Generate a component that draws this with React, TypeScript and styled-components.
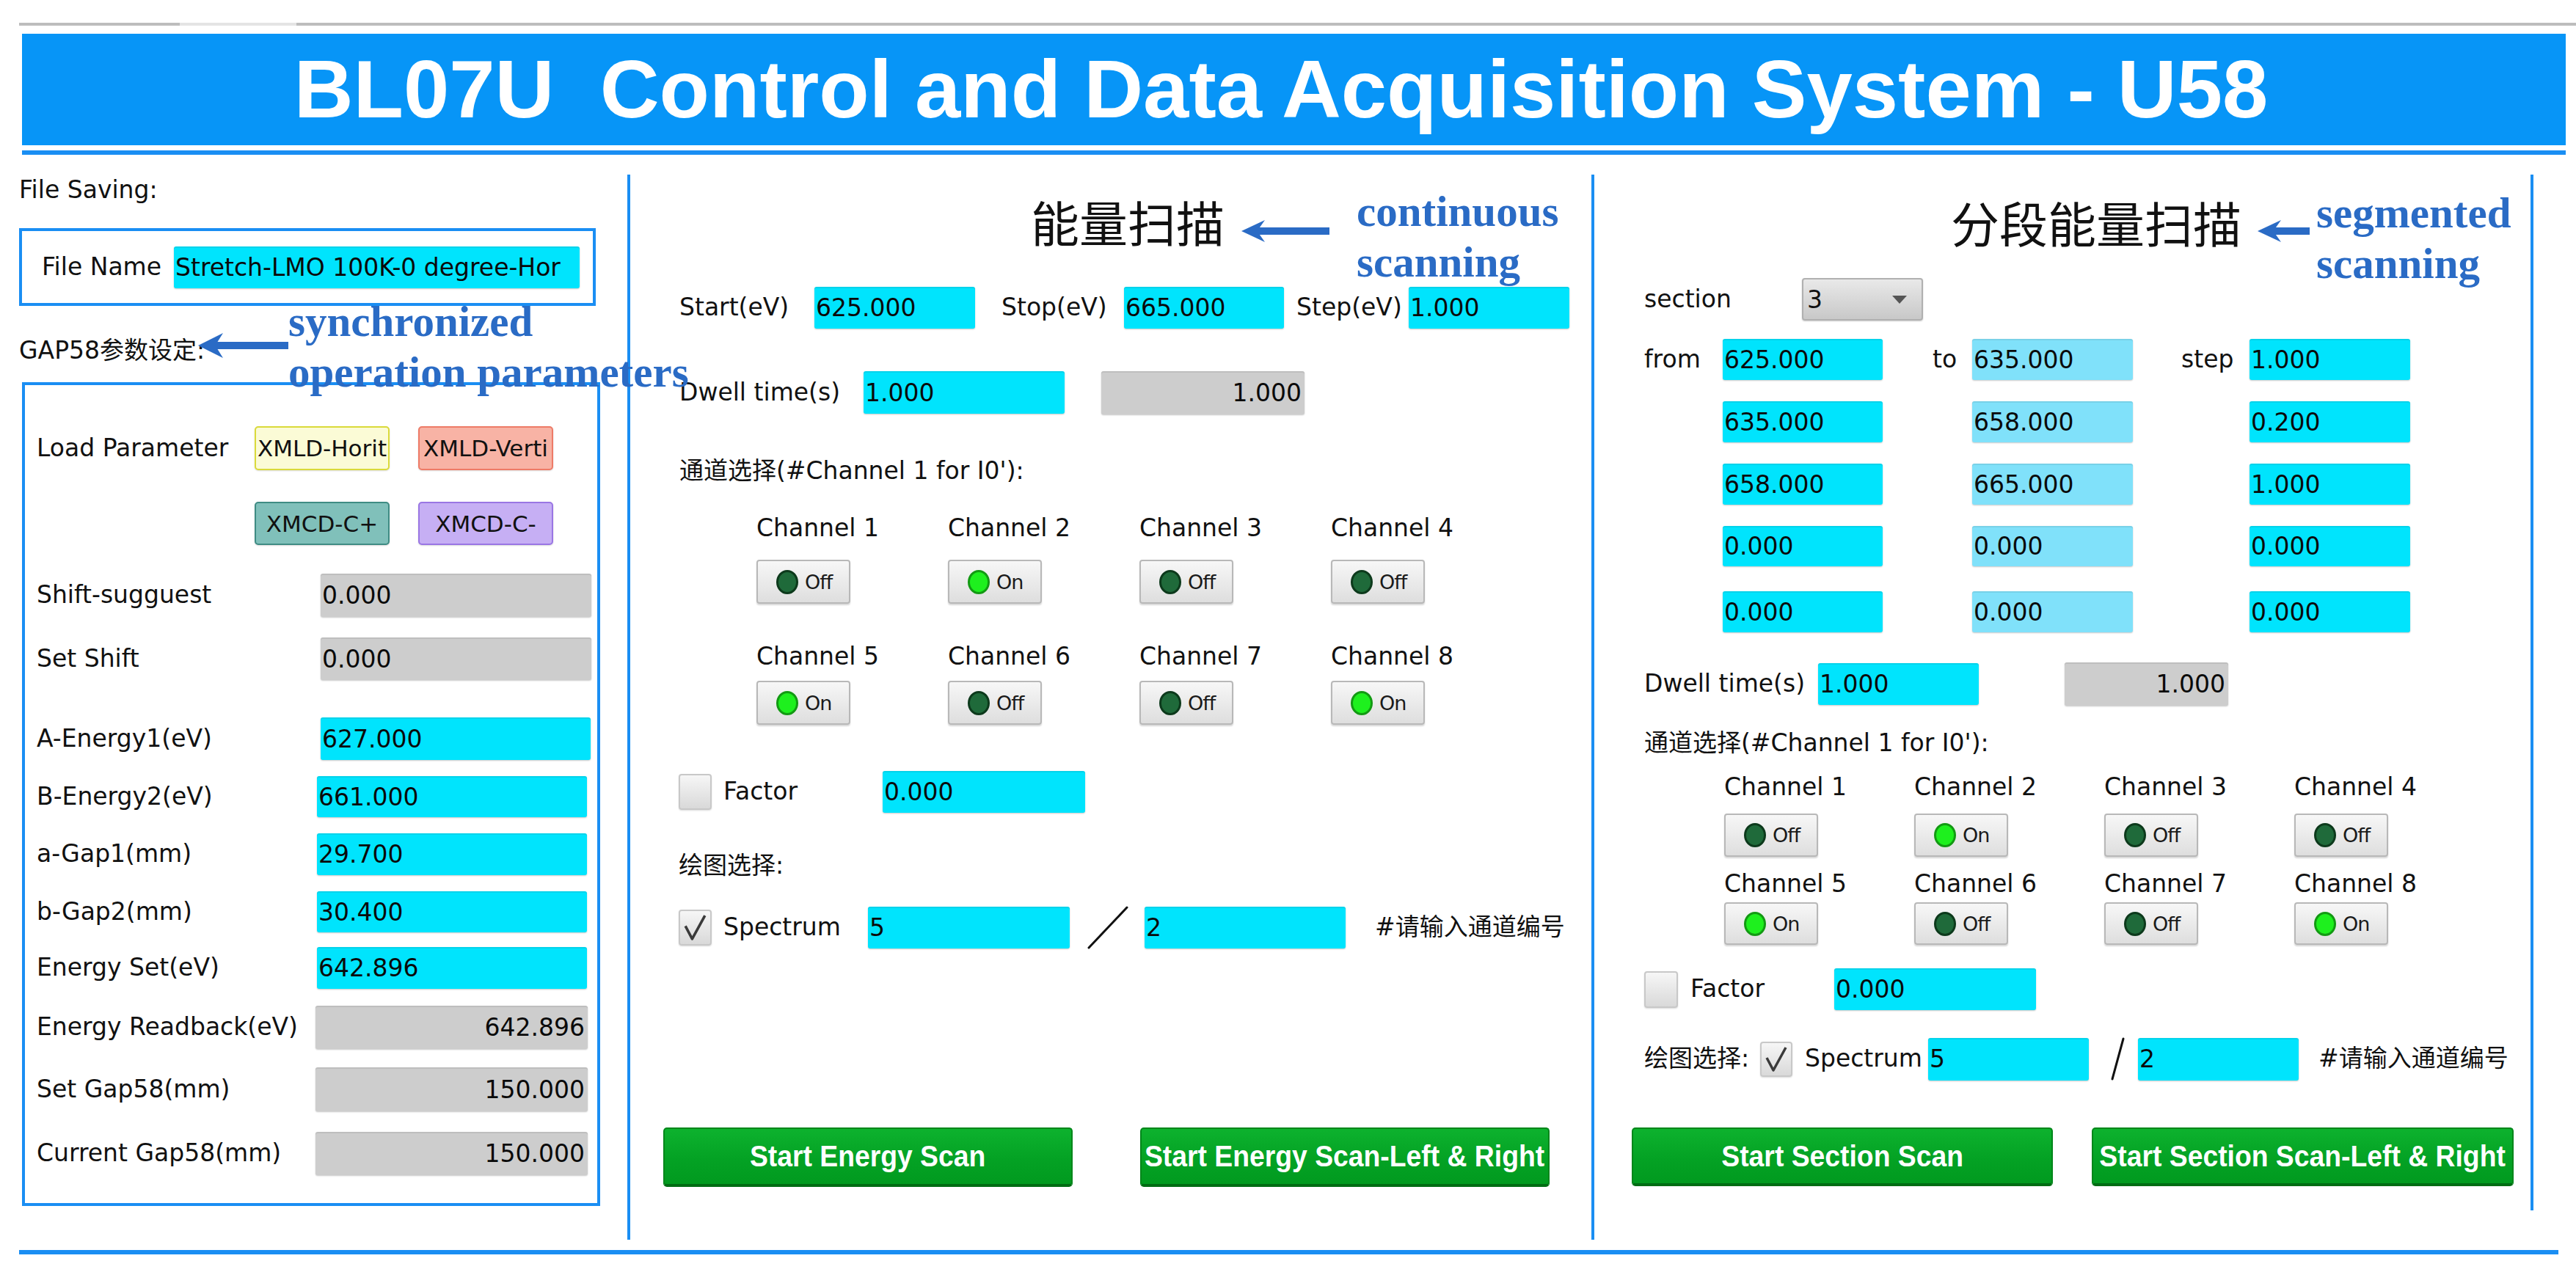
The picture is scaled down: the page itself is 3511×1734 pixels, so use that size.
import React from "react";
import styled, { createGlobalStyle, css } from "styled-components";

const LINE = "#1a8ef3";
const HEADER_BG = "#0795f7";
const NOTE = "#2a6bc5";
const SANS = `"DejaVu Sans", "Noto Sans CJK SC", sans-serif`;
const CJK = `"Noto Sans CJK SC", "DejaVu Sans", sans-serif`;

type Tone = "cyan" | "light" | "gray";
const TONES: Record<Tone, string> = {
  cyan: "#00e4fd",
  light: "#80e1fa",
  gray: "#cdcdcd",
};

type Preset = "yellow" | "salmon" | "teal" | "violet";
const PRESETS: Record<Preset, { bg: string; bd: string }> = {
  yellow: { bg: "#fbfbd6", bd: "#dada3a" },
  salmon: { bg: "#f8b3a5", bd: "#ee7b67" },
  teal: { bg: "#80c0ba", bd: "#3f8c84" },
  violet: { bg: "#c6aff4", bd: "#9a76e4" },
};

const GlobalStyle = createGlobalStyle`
  *, *::before, *::after { box-sizing: border-box; }
  html, body { margin: 0; padding: 0; background: #ffffff; overflow: hidden; }
  body { font-family: ${SANS}; color: #111; }
`;

const Page = styled.div`
  position: relative;
  width: 3511px;
  height: 1734px;
  padding-left: 26px;
  display: flex;
  flex-direction: column;
`;

const TopRule = styled.div`
  display: flex;
  margin-top: 31px;
  height: 4px;
  width: 3485px;
`;

const RuleSeg = styled.div<{ $w?: number; $light?: boolean }>`
  height: 100%;
  ${(p) => (p.$w ? css`width: ${p.$w}px;` : css`flex: 1;`)}
  background: ${(p) => (p.$light ? "#e4e4e4" : "#bdbdbd")};
`;

const HeaderBand = styled.header`
  margin-top: 11px;
  margin-left: 4px;
  width: 3467px;
  height: 152px;
  background: ${HEADER_BG};
  display: flex;
  align-items: center;
  justify-content: center;
  padding-right: 35px;
`;

const Title = styled.h1`
  margin: 0;
  font-family: "Liberation Sans", Arial, sans-serif;
  font-weight: 700;
  font-size: 112px;
  line-height: 1;
  color: #ffffff;
  white-space: pre;
`;

const HeaderRule = styled.div`
  margin-top: 7px;
  margin-left: 4px;
  width: 3467px;
  height: 6px;
  background: ${LINE};
`;

const Main = styled.main`
  display: flex;
  align-items: flex-start;
  height: 1479px;
`;

const LeftColumn = styled.section`
  width: 829px;
  flex-shrink: 0;
  display: flex;
  flex-direction: column;
`;

const MidPanel = styled.section`
  margin-top: 27px;
  width: 1314px;
  height: 1452px;
  flex-shrink: 0;
  border-left: 4px solid ${LINE};
  display: flex;
  flex-direction: column;
`;

const RightPanel = styled.section`
  margin-top: 27px;
  width: 1284px;
  height: 1452px;
  flex-shrink: 0;
  border-left: 4px solid ${LINE};
`;

const RightInner = styled.div`
  width: 1280px;
  height: 1412px;
  border-right: 4px solid ${LINE};
  display: flex;
  flex-direction: column;
`;

const BottomRule = styled.div`
  margin-top: 14px;
  width: 3461px;
  height: 6px;
  background: ${LINE};
`;

const Row = styled.div<{ $mt: number; $h: number; $pl?: number }>`
  display: flex;
  align-items: center;
  flex-shrink: 0;
  margin-top: ${(p) => p.$mt}px;
  height: ${(p) => p.$h}px;
  padding-left: ${(p) => p.$pl ?? 0}px;
`;

const Label = styled.span<{ $w?: number; $ml?: number }>`
  display: block;
  flex-shrink: 0;
  ${(p) => p.$w != null && css`width: ${p.$w}px;`}
  margin-left: ${(p) => p.$ml ?? 0}px;
  font-size: 33px;
  line-height: 1.16;
  white-space: nowrap;
  color: #111;
`;

const Field = styled.div<{ $w: number; $tone?: Tone; $right?: boolean; $ml?: number; $h?: number }>`
  flex-shrink: 0;
  width: ${(p) => p.$w}px;
  height: ${(p) => (p.$h ? `${p.$h}px` : "100%")};
  margin-left: ${(p) => p.$ml ?? 0}px;
  display: flex;
  align-items: center;
  justify-content: ${(p) => (p.$right ? "flex-end" : "flex-start")};
  padding: 0 ${(p) => (p.$right ? 4 : 2)}px;
  background: ${(p) => TONES[p.$tone ?? "cyan"]};
  border-radius: 3px;
  box-shadow: 0 1px 2px rgba(0, 0, 0, 0.22), inset 0 2px 0 rgba(0, 0, 0, 0.07);
  font-size: 33px;
  line-height: 1;
  white-space: nowrap;
  overflow: hidden;
  color: #0a0a0a;
`;

const FileBox = styled.div`
  margin-top: 33px;
  width: 786px;
  height: 106px;
  border: 4px solid ${LINE};
  display: flex;
  align-items: center;
  padding-left: 27px;
`;

const GapBox = styled.div`
  margin-top: 24px;
  margin-left: 4px;
  width: 788px;
  height: 1123px;
  border: 4px solid ${LINE};
  display: flex;
  flex-direction: column;
  padding-left: 16px;
`;

const PresetButton = styled.div<{ $tone: Preset; $ml?: number }>`
  flex-shrink: 0;
  width: 184px;
  height: 100%;
  margin-left: ${(p) => p.$ml ?? 0}px;
  display: flex;
  align-items: center;
  justify-content: center;
  background: ${(p) => PRESETS[p.$tone].bg};
  border: 2px solid ${(p) => PRESETS[p.$tone].bd};
  border-radius: 5px;
  box-shadow: 0 1px 2px rgba(0, 0, 0, 0.15);
  font-size: 31px;
  white-space: nowrap;
  color: #111;
`;

const PanelTitle = styled.h2<{ $mt: number; $pl: number }>`
  margin: ${(p) => p.$mt}px 0 0 0;
  padding-left: ${(p) => p.$pl}px;
  height: 66px;
  flex-shrink: 0;
  font-family: ${CJK};
  font-weight: 400;
  font-size: 66px;
  line-height: 66px;
  color: #111;
  white-space: nowrap;
`;

const ChannelRow = styled.div<{ $mt: number; $h: number; $pl: number; $col: number }>`
  display: grid;
  grid-template-columns: repeat(4, ${(p) => p.$col}px);
  align-items: center;
  flex-shrink: 0;
  margin-top: ${(p) => p.$mt}px;
  height: ${(p) => p.$h}px;
  padding-left: ${(p) => p.$pl}px;
`;

const Toggle = styled.div<{ $w: number }>`
  width: ${(p) => p.$w}px;
  height: 100%;
  display: flex;
  align-items: center;
  gap: 9px;
  padding-left: 25px;
  background: linear-gradient(#f7f7f7, #dedede);
  border: 2px solid #b8b8b8;
  border-radius: 4px;
  box-shadow: 0 2px 2px rgba(0, 0, 0, 0.16);
`;

const Led = styled.span<{ $on: boolean }>`
  flex-shrink: 0;
  width: 30px;
  height: 33px;
  border-radius: 50%;
  background: ${(p) => (p.$on ? "#1ef01e" : "#1f6a3a")};
  border: 3px solid ${(p) => (p.$on ? "#139a13" : "#0d3a1c")};
`;

const ToggleText = styled.span`
  font-size: 27px;
  line-height: 1;
  letter-spacing: -1px;
  color: #1a1a1a;
`;

const CheckBox = styled.div<{ $w: number; $h: number; $ml?: number }>`
  flex-shrink: 0;
  width: ${(p) => p.$w}px;
  height: ${(p) => p.$h}px;
  margin-left: ${(p) => p.$ml ?? 0}px;
  display: flex;
  align-items: center;
  justify-content: center;
  background: linear-gradient(#f6f6f6, #d9d9d9);
  border: 2px solid #c8c8c8;
  border-radius: 4px;
  box-shadow: 0 1px 2px rgba(0, 0, 0, 0.15);
`;

const Dropdown = styled.div`
  flex-shrink: 0;
  width: 165px;
  height: 100%;
  display: flex;
  align-items: center;
  justify-content: space-between;
  padding: 0 20px 0 5px;
  background: linear-gradient(#e9e9e9, #c8c8c8);
  border: 2px solid #b0b0b0;
  border-radius: 4px;
  box-shadow: 0 1px 2px rgba(0, 0, 0, 0.2);
  font-size: 33px;
  line-height: 1;
`;

const SlashSvg = styled.svg<{ $ml: number }>`
  flex-shrink: 0;
  margin-left: ${(p) => p.$ml}px;
  display: block;
`;

const ActionButton = styled.div<{ $w: number; $ml?: number }>`
  flex-shrink: 0;
  width: ${(p) => p.$w}px;
  height: 100%;
  margin-left: ${(p) => p.$ml ?? 0}px;
  display: flex;
  align-items: center;
  justify-content: center;
  overflow: hidden;
  background: linear-gradient(#0db22e, #04a224 55%, #019a1f);
  border: 2px solid #01861a;
  border-bottom: 4px solid #006c13;
  border-radius: 5px;
`;

/* the reference uses a slightly narrow bold grotesque; Liberation Sans Bold drawn a little narrower */
const ActionText = styled.span`
  display: inline-block;
  flex-shrink: 0;
  font-family: "Liberation Sans", Arial, sans-serif;
  font-weight: 700;
  font-size: 41px;
  line-height: 1;
  color: #ffffff;
  white-space: nowrap;
  transform: scaleX(0.91);
`;

const Note = styled.div<{ $x: number; $y: number }>`
  position: absolute;
  left: ${(p) => p.$x}px;
  top: ${(p) => p.$y}px;
  font-family: "Liberation Serif", "Times New Roman", serif;
  font-weight: 700;
  font-size: 59px;
  line-height: 69px;
  color: ${NOTE};
  white-space: nowrap;
  pointer-events: none;
`;

const ArrowSvg = styled.svg<{ $x: number; $y: number }>`
  position: absolute;
  left: ${(p) => p.$x}px;
  top: ${(p) => p.$y}px;
  display: block;
  pointer-events: none;
`;

function NoteArrow({ x, y, len, h, head }: { x: number; y: number; len: number; h: number; head: number }) {
  const c = h / 2;
  const sh = 5;
  const pts = [
    [0, c],
    [head, 0],
    [head * 0.78, c - sh],
    [len, c - sh],
    [len, c + sh],
    [head * 0.78, c + sh],
    [head, h],
  ]
    .map((p) => p.join(","))
    .join(" ");
  return (
    <ArrowSvg $x={x} $y={y} width={len} height={h} viewBox={`0 0 ${len} ${h}`}>
      <polygon points={pts} fill={NOTE} />
    </ArrowSvg>
  );
}

function Slash({ ml, w, h }: { ml: number; w: number; h: number }) {
  return (
    <SlashSvg $ml={ml} width={w} height={h} viewBox={`0 0 ${w} ${h}`}>
      <line x1={2} y1={h - 2} x2={w - 2} y2={2} stroke="#111" strokeWidth={3} strokeLinecap="round" />
    </SlashSvg>
  );
}

function Check({ w, h, ml, checked }: { w: number; h: number; ml?: number; checked?: boolean }) {
  return (
    <CheckBox $w={w} $h={h} $ml={ml}>
      {checked && (
        <svg width={w - 8} height={h - 8} viewBox="0 0 36 40">
          <polyline points="5,18 14,35 31,4" fill="none" stroke="#3a3a3a" strokeWidth={3.5} strokeLinejoin="round" />
        </svg>
      )}
    </CheckBox>
  );
}

function ChannelBlock({
  states,
  pl,
  col,
  btnW,
  rows,
}: {
  states: boolean[];
  pl: number;
  col: number;
  btnW: number;
  rows: { labelMt: number; btnMt: number; btnH: number }[];
}) {
  return (
    <>
      {rows.map((r, ri) => (
        <React.Fragment key={ri}>
          <ChannelRow $mt={r.labelMt} $h={38} $pl={pl} $col={col}>
            {[0, 1, 2, 3].map((i) => (
              <Label key={i}>Channel {ri * 4 + i + 1}</Label>
            ))}
          </ChannelRow>
          <ChannelRow $mt={r.btnMt} $h={r.btnH} $pl={pl} $col={col}>
            {[0, 1, 2, 3].map((i) => {
              const on = states[ri * 4 + i];
              return (
                <Toggle key={i} $w={btnW}>
                  <Led $on={on} />
                  <ToggleText>{on ? "On" : "Off"}</ToggleText>
                </Toggle>
              );
            })}
          </ChannelRow>
        </React.Fragment>
      ))}
    </>
  );
}

const CHANNELS = [false, true, false, false, true, false, false, true];

type GapRow = { mt: number; h: number; label: string; lw: number; fw: number; value: string; tone: Tone; right?: boolean };
const GAP_ROWS: GapRow[] = [
  { mt: 39, h: 59, label: "Shift-sugguest", lw: 387, fw: 369, value: "0.000", tone: "gray" },
  { mt: 28, h: 58, label: "Set Shift", lw: 387, fw: 369, value: "0.000", tone: "gray" },
  { mt: 51, h: 58, label: "A-Energy1(eV)", lw: 387, fw: 368, value: "627.000", tone: "cyan" },
  { mt: 22, h: 56, label: "B-Energy2(eV)", lw: 382, fw: 368, value: "661.000", tone: "cyan" },
  { mt: 22, h: 57, label: "a-Gap1(mm)", lw: 382, fw: 368, value: "29.700", tone: "cyan" },
  { mt: 22, h: 56, label: "b-Gap2(mm)", lw: 382, fw: 368, value: "30.400", tone: "cyan" },
  { mt: 20, h: 57, label: "Energy Set(eV)", lw: 382, fw: 368, value: "642.896", tone: "cyan" },
  { mt: 23, h: 59, label: "Energy Readback(eV)", lw: 380, fw: 371, value: "642.896", tone: "gray", right: true },
  { mt: 25, h: 60, label: "Set Gap58(mm)", lw: 380, fw: 371, value: "150.000", tone: "gray", right: true },
  { mt: 28, h: 59, label: "Current Gap58(mm)", lw: 380, fw: 371, value: "150.000", tone: "gray", right: true },
];

const SECTIONS = [
  { mt: 25, h: 56, from: "625.000", to: "635.000", step: "1.000" },
  { mt: 29, h: 56, from: "635.000", to: "658.000", step: "0.200" },
  { mt: 29, h: 56, from: "658.000", to: "665.000", step: "1.000" },
  { mt: 29, h: 55, from: "0.000", to: "0.000", step: "0.000" },
  { mt: 34, h: 56, from: "0.000", to: "0.000", step: "0.000" },
];

export default function App() {
  return (
    <>
      <GlobalStyle />
      <Page>
        <TopRule>
          <RuleSeg $w={219} />
          <RuleSeg $w={159} $light />
          <RuleSeg />
        </TopRule>
        <HeaderBand>
          <Title>{"BL07U  Control and Data Acquisition System - U58"}</Title>
        </HeaderBand>
        <HeaderRule />

        <Main>
          <LeftColumn>
            <Row $mt={29} $h={38}>
              <Label>File Saving:</Label>
            </Row>
            <FileBox>
              <Label $w={180}>File Name</Label>
              <Field $w={553} $h={57}>
                Stretch-LMO 100K-0 degree-Hor
              </Field>
            </FileBox>
            <Row $mt={42} $h={38}>
              <Label>GAP58参数设定:</Label>
            </Row>
            <GapBox>
              <Row $mt={56} $h={60}>
                <Label $w={297}>Load Parameter</Label>
                <PresetButton $tone="yellow">XMLD-Horit</PresetButton>
                <PresetButton $tone="salmon" $ml={39}>
                  XMLD-Verti
                </PresetButton>
              </Row>
              <Row $mt={43} $h={59} $pl={297}>
                <PresetButton $tone="teal">XMCD-C+</PresetButton>
                <PresetButton $tone="violet" $ml={39}>
                  XMCD-C-
                </PresetButton>
              </Row>
              {GAP_ROWS.map((r) => (
                <Row key={r.label} $mt={r.mt} $h={r.h}>
                  <Label $w={r.lw}>{r.label}</Label>
                  <Field $w={r.fw} $tone={r.tone} $right={r.right}>
                    {r.value}
                  </Field>
                </Row>
              ))}
            </GapBox>
          </LeftColumn>

          <MidPanel>
            <PanelTitle $mt={30} $pl={546}>
              能量扫描
            </PanelTitle>
            <Row $mt={57} $h={57} $pl={67}>
              <Label $w={184}>Start(eV)</Label>
              <Field $w={219}>625.000</Field>
              <Label $w={167} $ml={36}>
                Stop(eV)
              </Label>
              <Field $w={218}>665.000</Field>
              <Label $w={153} $ml={17}>
                Step(eV)
              </Label>
              <Field $w={219}>1.000</Field>
            </Row>
            <Row $mt={57} $h={60} $pl={67}>
              <Label $w={251}>Dwell time(s)</Label>
              <Field $w={274} $h={58}>
                1.000
              </Field>
              <Field $w={277} $h={59} $ml={50} $tone="gray" $right>
                1.000
              </Field>
            </Row>
            <Row $mt={58} $h={38} $pl={67}>
              <Label>通道选择(#Channel 1 for I0'):</Label>
            </Row>
            <ChannelBlock
              states={CHANNELS}
              pl={172}
              col={261}
              btnW={128}
              rows={[
                { labelMt: 40, btnMt: 24, btnH: 60 },
                { labelMt: 53, btnMt: 14, btnH: 60 },
              ]}
            />
            <Row $mt={62} $h={58} $pl={66}>
              <Check w={45} h={49} />
              <Label $w={217} $ml={16}>
                Factor
              </Label>
              <Field $w={276} $h={57}>
                0.000
              </Field>
            </Row>
            <Row $mt={53} $h={38} $pl={66}>
              <Label>绘图选择:</Label>
            </Row>
            <Row $mt={36} $h={59} $pl={66}>
              <Check w={45} h={49} checked />
              <Label $w={197} $ml={16}>
                Spectrum
              </Label>
              <Field $w={275} $h={57}>
                5
              </Field>
              <Slash ml={24} w={56} h={59} />
              <Field $w={274} $h={57} $ml={22}>
                2
              </Field>
              <Label $ml={40}>#请输入通道编号</Label>
            </Row>
            <Row $mt={243} $h={81} $pl={45}>
              <ActionButton $w={558}>
                <ActionText>Start Energy Scan</ActionText>
              </ActionButton>
              <ActionButton $w={558} $ml={92}>
                <ActionText>Start Energy Scan-Left &amp; Right</ActionText>
              </ActionButton>
            </Row>
          </MidPanel>

          <RightPanel>
            <RightInner>
              <PanelTitle $mt={31} $pl={486}>
                分段能量扫描
              </PanelTitle>
              <Row $mt={44} $h={58} $pl={68}>
                <Label $w={215}>section</Label>
                <Dropdown>
                  <span>3</span>
                  <svg width={20} height={11} viewBox="0 0 20 11">
                    <polygon points="0,0 20,0 10,11" fill="#555" />
                  </svg>
                </Dropdown>
              </Row>
              {SECTIONS.map((s, i) => (
                <Row key={i} $mt={s.mt} $h={s.h} $pl={68}>
                  <Label $w={107}>{i === 0 ? "from" : ""}</Label>
                  <Field $w={218}>{s.from}</Field>
                  <Label $w={54} $ml={68}>
                    {i === 0 ? "to" : ""}
                  </Label>
                  <Field $w={219} $tone="light">
                    {s.to}
                  </Field>
                  <Label $w={93} $ml={66}>
                    {i === 0 ? "step" : ""}
                  </Label>
                  <Field $w={219}>{s.step}</Field>
                </Row>
              ))}
              <Row $mt={40} $h={60} $pl={68}>
                <Label $w={237}>Dwell time(s)</Label>
                <Field $w={219} $h={57}>
                  1.000
                </Field>
                <Field $w={223} $h={59} $ml={117} $tone="gray" $right>
                  1.000
                </Field>
              </Row>
              <Row $mt={32} $h={38} $pl={68}>
                <Label>通道选择(#Channel 1 for I0'):</Label>
              </Row>
              <ChannelBlock
                states={CHANNELS}
                pl={177}
                col={259}
                btnW={128}
                rows={[
                  { labelMt: 22, btnMt: 17, btnH: 59 },
                  { labelMt: 18, btnMt: 6, btnH: 58 },
                ]}
              />
              <Row $mt={32} $h={57} $pl={68}>
                <Check w={46} h={50} />
                <Label $w={196} $ml={17}>
                  Factor
                </Label>
                <Field $w={275}>0.000</Field>
              </Row>
              <Row $mt={37} $h={59} $pl={68}>
                <Label $w={158}>绘图选择:</Label>
                <Check w={44} h={48} checked />
                <Label $w={168} $ml={17}>
                  Spectrum
                </Label>
                <Field $w={219} $h={58}>
                  5
                </Field>
                <Slash ml={30} w={19} h={59} />
                <Field $w={219} $h={58} $ml={18}>
                  2
                </Field>
                <Label $ml={27}>#请输入通道编号</Label>
              </Row>
              <Row $mt={64} $h={80} $pl={51}>
                <ActionButton $w={574}>
                  <ActionText>Start Section Scan</ActionText>
                </ActionButton>
                <ActionButton $w={575} $ml={53}>
                  <ActionText>Start Section Scan-Left &amp; Right</ActionText>
                </ActionButton>
              </Row>
            </RightInner>
          </RightPanel>
        </Main>
        <BottomRule />

        <NoteArrow x={270} y={454} len={123} h={34} head={34} />
        <Note $x={393} $y={404}>
          synchronized
          <br />
          operation parameters
        </Note>

        <NoteArrow x={1692} y={300} len={120} h={30} head={32} />
        <Note $x={1849} $y={254}>
          continuous
          <br />
          scanning
        </Note>

        <NoteArrow x={3077} y={300} len={71} h={30} head={32} />
        <Note $x={3157} $y={256}>
          segmented
          <br />
          scanning
        </Note>
      </Page>
    </>
  );
}
